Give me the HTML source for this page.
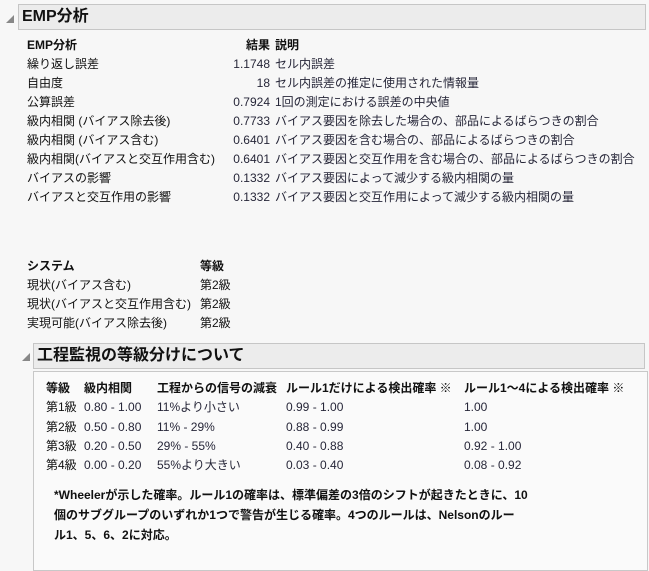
<!DOCTYPE html>
<html><head><meta charset="utf-8"><style>
body{margin:0;width:649px;height:564px;background:#f7f7f7;font-family:"Liberation Sans","Noto Sans CJK JP",sans-serif;font-size:12px;color:#111;position:relative;overflow:hidden}
.a{position:absolute;white-space:nowrap;line-height:14px}
.b{font-weight:bold}
.v{color:#262638}
.r{text-align:right}
.hdr{position:absolute;background:#ececec;border:1px solid #c6c6c6;font-weight:bold;font-size:16px;line-height:24px;padding-left:3px;box-sizing:border-box}
.tri{position:absolute;width:0;height:0;border-left:8px solid transparent;border-bottom:8px solid #888}
</style></head><body>
<div class="tri" style="left:6px;top:15px"></div>
<div class="hdr" style="left:18px;top:4px;width:628px;height:26px">EMP分析</div>

<div class="a b" style="left:27px;top:38px">EMP分析</div>
<div class="a b r" style="left:200px;top:38px;width:70px">結果</div>
<div class="a b" style="left:275px;top:38px">説明</div>

<div class="a" style="left:27px;top:57px">繰り返し誤差</div>
<div class="a" style="left:27px;top:76px">自由度</div>
<div class="a" style="left:27px;top:95px">公算誤差</div>
<div class="a" style="left:27px;top:114px">級内相関 (バイアス除去後)</div>
<div class="a" style="left:27px;top:133px">級内相関 (バイアス含む)</div>
<div class="a" style="left:27px;top:152px">級内相関(バイアスと交互作用含む)</div>
<div class="a" style="left:27px;top:171px">バイアスの影響</div>
<div class="a" style="left:27px;top:190px">バイアスと交互作用の影響</div>

<div class="a r v" style="left:200px;top:57px;width:70px">1.1748</div>
<div class="a r v" style="left:200px;top:76px;width:70px">18</div>
<div class="a r v" style="left:200px;top:95px;width:70px">0.7924</div>
<div class="a r v" style="left:200px;top:114px;width:70px">0.7733</div>
<div class="a r v" style="left:200px;top:133px;width:70px">0.6401</div>
<div class="a r v" style="left:200px;top:152px;width:70px">0.6401</div>
<div class="a r v" style="left:200px;top:171px;width:70px">0.1332</div>
<div class="a r v" style="left:200px;top:190px;width:70px">0.1332</div>

<div class="a v" style="left:275px;top:57px">セル内誤差</div>
<div class="a v" style="left:275px;top:76px">セル内誤差の推定に使用された情報量</div>
<div class="a v" style="left:275px;top:95px">1回の測定における誤差の中央値</div>
<div class="a v" style="left:275px;top:114px">バイアス要因を除去した場合の、部品によるばらつきの割合</div>
<div class="a v" style="left:275px;top:133px">バイアス要因を含む場合の、部品によるばらつきの割合</div>
<div class="a v" style="left:275px;top:152px">バイアス要因と交互作用を含む場合の、部品によるばらつきの割合</div>
<div class="a v" style="left:275px;top:171px">バイアス要因によって減少する級内相関の量</div>
<div class="a v" style="left:275px;top:190px">バイアス要因と交互作用によって減少する級内相関の量</div>

<div class="a b" style="left:27px;top:259px">システム</div>
<div class="a b" style="left:200px;top:259px">等級</div>
<div class="a" style="left:27px;top:278px">現状(バイアス含む)</div>
<div class="a" style="left:27px;top:297px">現状(バイアスと交互作用含む)</div>
<div class="a" style="left:27px;top:316px">実現可能(バイアス除去後)</div>
<div class="a" style="left:200px;top:278px">第2級</div>
<div class="a" style="left:200px;top:297px">第2級</div>
<div class="a" style="left:200px;top:316px">第2級</div>

<div class="tri" style="left:22px;top:353px"></div>
<div class="hdr" style="left:33px;top:343px;width:612px;height:26px">工程監視の等級分けについて</div>
<div style="position:absolute;left:33px;top:371px;width:615px;height:200px;border:1px solid #c8c8c8;background:#fafafa;box-sizing:border-box"></div>

<div class="a b" style="left:46px;top:381px">等級</div>
<div class="a b" style="left:84px;top:381px">級内相関</div>
<div class="a b" style="left:157px;top:381px">工程からの信号の減衰</div>
<div class="a b" style="left:286px;top:381px">ルール1だけによる検出確率 <span style="font-weight:normal">※</span></div>
<div class="a b" style="left:464px;top:381px">ルール1〜4による検出確率 <span style="font-weight:normal">※</span></div>

<div class="a" style="left:46px;top:400px">第1級</div>
<div class="a" style="left:46px;top:420px">第2級</div>
<div class="a" style="left:46px;top:439px">第3級</div>
<div class="a" style="left:46px;top:458px">第4級</div>
<div class="a v" style="left:84px;top:400px">0.80 - 1.00</div>
<div class="a v" style="left:84px;top:420px">0.50 - 0.80</div>
<div class="a v" style="left:84px;top:439px">0.20 - 0.50</div>
<div class="a v" style="left:84px;top:458px">0.00 - 0.20</div>
<div class="a v" style="left:157px;top:400px">11%より小さい</div>
<div class="a v" style="left:157px;top:420px">11% - 29%</div>
<div class="a v" style="left:157px;top:439px">29% - 55%</div>
<div class="a v" style="left:157px;top:458px">55%より大きい</div>
<div class="a v" style="left:286px;top:400px">0.99 - 1.00</div>
<div class="a v" style="left:286px;top:420px">0.88 - 0.99</div>
<div class="a v" style="left:286px;top:439px">0.40 - 0.88</div>
<div class="a v" style="left:286px;top:458px">0.03 - 0.40</div>
<div class="a v" style="left:464px;top:400px">1.00</div>
<div class="a v" style="left:464px;top:420px">1.00</div>
<div class="a v" style="left:464px;top:439px">0.92 - 1.00</div>
<div class="a v" style="left:464px;top:458px">0.08 - 0.92</div>

<div class="a b" style="left:54px;top:488px">*Wheelerが示した確率。ルール1の確率は、標準偏差の3倍のシフトが起きたときに、10</div>
<div class="a b" style="left:54px;top:508px">個のサブグループのいずれか1つで警告が生じる確率。4つのルールは、Nelsonのルー</div>
<div class="a b" style="left:54px;top:528px">ル1、5、6、2に対応。</div>
</body></html>
